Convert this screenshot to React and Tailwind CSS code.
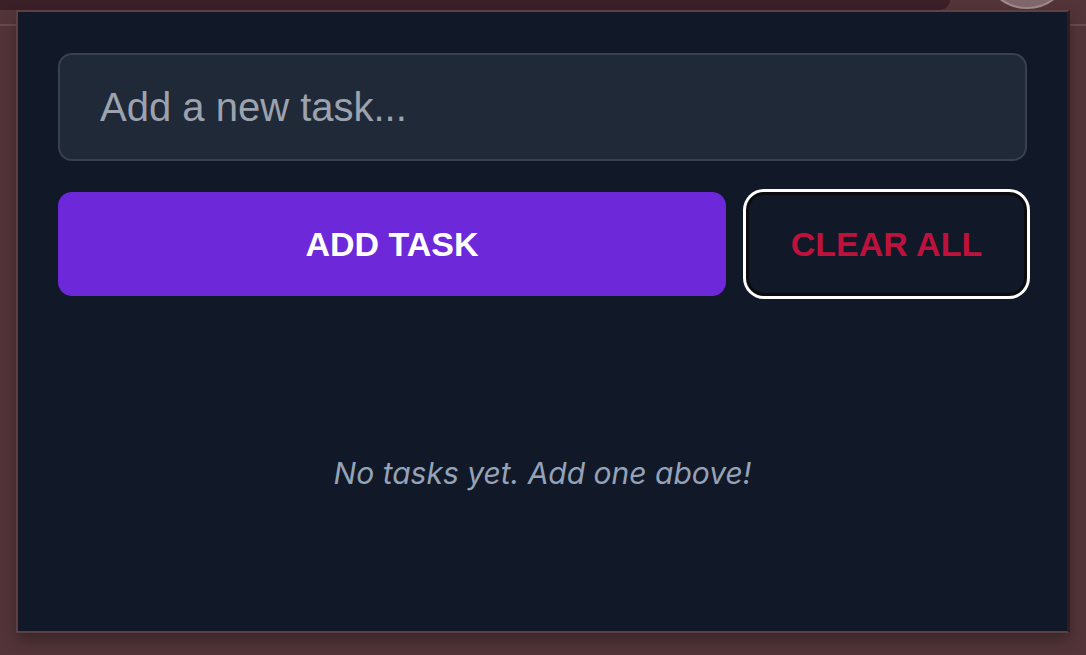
import { useState } from 'react';

export default function App() {
  const [task, setTask] = useState('');
  const [tasks, setTasks] = useState([]);

  const addTask = () => {
    if (!task.trim()) return;
    setTasks(prev => [...prev, task.trim()]);
    setTask('');
  };

  return (
    <div className="relative w-[1086px] h-[655px] overflow-hidden bg-[#533539] font-['Liberation_Sans',Arial,sans-serif]">
      {/* window chrome behind the panel */}
      <div className="absolute left-0 right-0 top-[24px] h-[2px] bg-[#694a4f]" />
      <div className="flex h-[10px] overflow-hidden">
        <div className="w-[950px] h-[10px] bg-[#3b2027] rounded-br-[26px]" />
        <div className="ml-[32px] w-[90px] h-[90px] shrink-0 -mt-[81px] rounded-full bg-[#7f676b] border-2 border-[#a08a8e]" />
      </div>

      <div className="relative ml-[16px] w-[1054px] h-[623px] flex flex-col px-10 pt-[41px] bg-[#111827] border-2 border-[#5e3f43] border-r-[3px] border-r-[#2e1c20] shadow-[0_8px_14px_rgba(0,0,0,0.3)]">
        <input
          value={task}
          onChange={e => setTask(e.target.value)}
          onKeyDown={e => e.key === 'Enter' && addTask()}
          placeholder="Add a new task..."
          className="w-full h-[108px] px-10 rounded-[14px] bg-[#1f2937] border-2 border-[#374151] text-[40px] text-white placeholder:text-[#9ca3af] outline-none"
        />

        <div className="mt-[31px] flex gap-5">
          <button
            onClick={addTask}
            className="flex-1 h-[104px] rounded-[14px] bg-[#6d28d9] text-white text-[34px] font-bold"
          >
            ADD TASK
          </button>
          <button
            onClick={() => setTasks([])}
            className="w-[281px] h-[104px] rounded-[18px] bg-[#111827] border-[3px] border-[#0c0c0e] ring-[3px] ring-white text-[#be123c] text-[34px] font-bold"
          >
            CLEAR ALL
          </button>
        </div>

        {tasks.length === 0 ? (
          <p className="mt-[155px] text-center text-[30px] leading-[45px] italic text-[#94a3b8] font-['Inter',sans-serif]">
            No tasks yet. Add one above!
          </p>
        ) : (
          <ul className="mt-8 flex flex-col gap-3">
            {tasks.map((t, i) => (
              <li key={i} className="px-6 py-4 rounded-[14px] bg-[#1f2937] text-white text-2xl">{t}</li>
            ))}
          </ul>
        )}
      </div>
    </div>
  );
}
